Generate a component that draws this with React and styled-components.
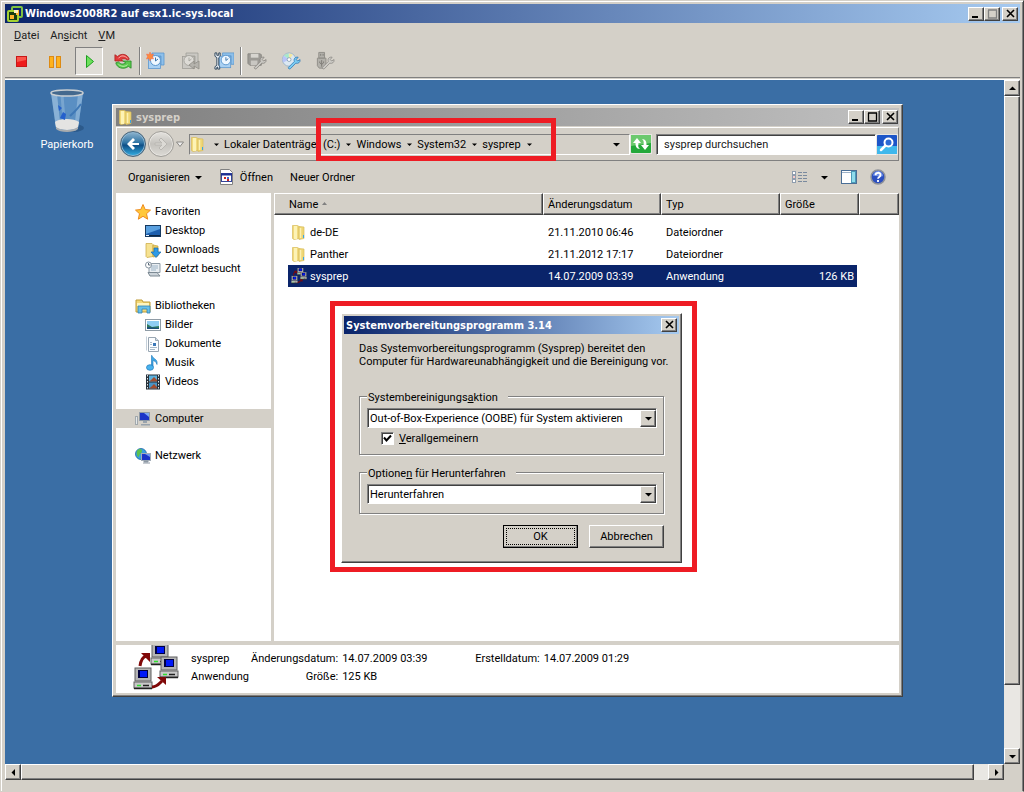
import { useState } from "react";
import styled, { createGlobalStyle, css } from "styled-components";

const files = [
  { name: "de-DE", date: "21.11.2010 06:46", type: "Dateiordner", size: "", icon: "folder" },
  { name: "Panther", date: "21.11.2012 17:17", type: "Dateiordner", size: "", icon: "folder" },
  { name: "sysprep", date: "14.07.2009 03:39", type: "Anwendung", size: "126 KB", icon: "sysprep" },
];

const navGroups = [
  {
    name: "Favoriten",
    icon: "star",
    items: [
      { name: "Desktop", icon: "desktop" },
      { name: "Downloads", icon: "downloads" },
      { name: "Zuletzt besucht", icon: "recent" },
    ],
  },
  {
    name: "Bibliotheken",
    icon: "library",
    items: [
      { name: "Bilder", icon: "pictures" },
      { name: "Dokumente", icon: "document" },
      { name: "Musik", icon: "music" },
      { name: "Videos", icon: "video" },
    ],
  },
  { name: "Computer", icon: "computer", active: true, items: [] },
  { name: "Netzwerk", icon: "network", items: [] },
];

const crumbs = ["Lokaler Datenträger (C:)", "Windows", "System32", "sysprep"];

const clockPart = (
  <>
    <path d="M6 2h12v12h-3V5H6z" fill="#8fc0ea" stroke="#5b97cf" strokeWidth="0.800" />
    <rect x="2.500" y="5.500" width="12" height="12" fill="#a9d0f2" stroke="#5b97cf" strokeWidth="0.800" />
    <circle cx="9.500" cy="9.500" r="5" fill="#eef7ff" stroke="#5b97cf" />
    <path d="M9.500 6.500v3.500l2.500-2" fill="none" stroke="#3b74ac" />
  </>
);

const wrench = (color, edge) => (
  <path
    d="M8 17L14 11C13 8 15 6 18 6.500L16 9L17.500 10.500L20 9C20.500 12 18 13.500 15.500 12.800L10 18.500C8.500 19.500 7 18 8 17Z"
    fill={color}
    stroke={edge}
    strokeWidth="0.800"
  />
);

const pc = (x, y) => (
  <g transform={`translate(${x} ${y})`}>
    <rect x="1" y="0" width="16" height="13" fill="#b4b4b4" stroke="#606060" />
    <rect x="4" y="2" width="10" height="8" fill="#000040" />
    <rect x="6" y="3" width="7" height="6" fill="#0018f8" />
    <rect x="0" y="14" width="18" height="6" fill="#c8c8c8" stroke="#606060" />
    <path d="M3 17.500h4" stroke="#30e030" strokeWidth="1.500" />
    <path d="M9 17.500h6M0 20.500h18" stroke="#202020" strokeWidth="1.500" />
  </g>
);

const icons = {
  vm: (
    <>
      <rect x="5" y="1" width="10" height="10" rx="1" fill="none" stroke="#7fc241" strokeWidth="2" />
      <rect x="1" y="5" width="10" height="10" rx="1" fill="#163d12" stroke="#a4d233" strokeWidth="2" />
      <path d="M3 9h4v4H3z" fill="#ffb52e" />
      <path d="M7 4h5v5H9V7H7z" fill="#ffb52e" />
      <rect x="7" y="4" width="4" height="3" fill="#fff3c0" />
    </>
  ),
  stop: (
    <>
      <rect x="5.500" y="5.500" width="10" height="10" fill="#ee1c1c" stroke="#c81818" />
      <path d="M6 6h9v3l-9 2z" fill="#ff6d60" opacity="0.700" />
    </>
  ),
  pause: (
    <g fill="#ffb21c" stroke="#dc8a14">
      <rect x="4.500" y="5.500" width="4" height="11" />
      <rect x="11.500" y="5.500" width="4" height="11" />
    </g>
  ),
  play: <path d="M7.500 4.500v12l7-6z" fill="#6ee05c" stroke="#1da020" strokeLinejoin="round" />,
  reset: (
    <>
      <path d="M1 10V3l3 2c4-4 11-3 13 3l-2 1c-3-2-5-2-7 0l2 1z" fill="#e03a3a" stroke="#a81c1c" strokeWidth="0.800" />
      <path d="M19 10v8l-3-2C11 20 3 18 2 12l3-1c3 3 5 3 8 1l-3-2z" fill="#5cc84e" stroke="#1c861f" strokeWidth="0.800" />
      <path d="M5 7c3-4 7-3 10 0" fill="none" stroke="#ffc0b8" />
      <path d="M15 14c-3 3-7 2-10 0" fill="none" stroke="#c0f4b0" />
    </>
  ),
  snapshot: (
    <>
      {clockPart}
      <path d="M4 1l1 2.500 2.500-0.500-1 2.500 1 2.500L5 7.500 4 10 3 7.500 0.500 8l1-2.500-1-2.500L3 3.500z" fill="#ff8a3c" stroke="#f06a50" strokeWidth="0.500" />
    </>
  ),
  revert: (
    <g fill="#cac8c3" stroke="#a09e98" strokeWidth="0.800">
      <path d="M6 2h12v12h-3V5H6z" />
      <rect x="2.500" y="5.500" width="12" height="12" />
      <circle cx="9" cy="9.500" r="5" fill="#dddbd6" />
      <path d="M9 6.500v3.500l2.500-2" fill="none" />
      <path d="M14 10l-5 4 5 4v-3l5 3v-8l-5 3z" fill="#b5b3ad" stroke="#8f8d87" />
    </g>
  ),
  manager: (
    <>
      <g transform="translate(3 0)">{clockPart}</g>
      <path d="M1 2v3.500l2 1.500v8l-2 1.500V19h2v-2h1v2h2v-2.500L5 15V7l1.500-1.500V2H5v2.500H3V2z" fill="#e8eef4" stroke="#1f3850" strokeWidth="0.900" />
    </>
  ),
  floppy: (
    <>
      <path d="M1 3h13l1 1v11H3l-2-2z" fill="#9c9a95" stroke="#8a8883" />
      <rect x="4" y="3" width="8" height="4" fill="#d7d5d0" />
      <rect x="4" y="10" width="7" height="5" fill="#c9c7c2" />
      {wrench("#c9c7c2", "#83817c")}
    </>
  ),
  cd: (
    <>
      <circle cx="8.500" cy="9" r="7" fill="#dce8f2" stroke="#9db4c6" />
      <path d="M8.500 9L3 5a7 7 0 0 1 5-2.500z" fill="#a8e8c8" />
      <path d="M8.500 9V2.500a7 7 0 0 1 4 1.500z" fill="#f4e8a0" />
      <path d="M8.500 9l-6 3A7 7 0 0 1 3 5z" fill="#b8c4f8" />
      <circle cx="8.500" cy="9" r="2" fill="#fff" stroke="#8fa5b8" />
      {wrench("#7cccf2", "#2a76b4")}
    </>
  ),
  usb: (
    <>
      <path d="M4 1.500h6v6H4zM2.500 7.500h9v8l-2 2.500h-5l-2-2.500z" fill="#b3b1ab" stroke="#908e88" />
      <path d="M6 3v2M8.500 3v2M7 9.500v7M5 11v1.500L7 14l2-1.500V11" fill="none" stroke="#7d7b76" />
      {wrench("#cdcbc6", "#8a8883")}
    </>
  ),
  folder: (
    <>
      <path d="M1.500 1.500h5l1.500 1v12l-5 1-1.500-1z" fill="#f2da7c" stroke="#d9bd5c" strokeWidth="0.700" />
      <path d="M3 2h3v13H3z" fill="#fdf3b5" />
      <path d="M8 2.500l5 0.500v11.500l-5 1z" fill="#efd675" stroke="#d9bd5c" strokeWidth="0.700" />
      <path d="M9.500 4v10" stroke="#fbf0b4" strokeWidth="1.500" />
      <path d="M12.500 11v3" stroke="#38a5e8" />
    </>
  ),
  star: (
    <path d="M8 0.500l2.200 5 5.300 0.600-4 3.600 1.200 5.500L8 12.300l-4.700 2.900 1.200-5.500-4-3.600 5.300-0.600z" fill="#ffc83a" stroke="#ee8a1d" strokeWidth="1" />
  ),
  desktop: (
    <>
      <rect x="0.500" y="2.500" width="15" height="11" fill="#1d5fae" stroke="#16395f" />
      <path d="M1 3h14v3L1 11z" fill="#5aa0df" />
      <path d="M1 12.500h14" stroke="#0d2746" />
      <path d="M1 12.500h3" stroke="#e8f3ff" />
    </>
  ),
  downloads: (
    <>
      <path d="M1 1.500h6l1 1v12l-6 1-1-1z" fill="#f6e292" stroke="#c9a63e" strokeWidth="0.700" />
      <path d="M8 3l5 1v10l-5 1z" fill="#eacb62" stroke="#c9a63e" strokeWidth="0.700" />
      <path d="M9 6h4v4h3l-5 5.500L6 10h3z" fill="#2d9ae6" stroke="#176bb0" strokeWidth="0.700" />
    </>
  ),
  recent: (
    <>
      <path d="M4 2.500h11v9H4z" fill="#e9eef2" stroke="#8d9aa5" />
      <path d="M6 5h7M6 7h7M6 9h5" stroke="#9cb3c6" />
      <path d="M3 11.500h9l3 3.500H5z" fill="#ccd4da" stroke="#7c8993" />
      <circle cx="3.500" cy="4" r="3" fill="#fff" stroke="#8794a0" />
      <path d="M3.500 2v2h2" fill="none" stroke="#5a6b7a" />
    </>
  ),
  library: (
    <>
      <path d="M1 2h6l1 2h7v10H1z" fill="#f3d877" stroke="#bf9b36" />
      <path d="M2 5h12v3H2z" fill="#fff5be" />
      <path d="M3 8h12v7h-3v-4H7v4H3z" fill="#67bfe8" stroke="#2f84b6" strokeWidth="0.800" />
    </>
  ),
  pictures: (
    <>
      <rect x="0.500" y="2.500" width="15" height="11" fill="#fff" stroke="#8f9ca6" />
      <rect x="2" y="4" width="12" height="8" fill="#8fcdf2" />
      <path d="M2 7l5 3 7-1v3H2z" fill="#2f7a5c" />
      <path d="M2 10l12 1v1H2z" fill="#1b4f7a" />
    </>
  ),
  document: (
    <>
      <path d="M3.500 1.500h7l3 3v11h-10z" fill="#fbfdff" stroke="#99a6b2" />
      <path d="M10.500 1.500v3h3" fill="#d3dde6" stroke="#99a6b2" />
      <rect x="8" y="7" width="3" height="3" fill="#3a78b8" />
      <path d="M5 6.500h2M5 8.500h2M5 11.500h7M5 13.500h5" stroke="#a8bac9" />
      <path d="M1.500 0.500v14" stroke="#c5d0da" />
    </>
  ),
  music: (
    <>
      <path d="M7 0.500c1 4 6 3 5 9-1-3-3-4-4-4v6.500H6.500V0.500z" fill="#3fa7e6" stroke="#1c77b8" strokeWidth="0.600" />
      <ellipse cx="5" cy="12.500" rx="3.500" ry="2.800" fill="#48b2ee" stroke="#1c77b8" strokeWidth="0.700" />
    </>
  ),
  video: (
    <>
      <rect x="1" y="0.500" width="14" height="15" fill="#27313a" />
      <path d="M2.500 1v14M13.500 1v14" stroke="#dfe6ea" strokeDasharray="1.500 1.500" />
      <rect x="4" y="1.500" width="8" height="6" fill="#5cb1dd" />
      <rect x="4" y="8.500" width="8" height="6" fill="#4a94c4" />
      <path d="M6 6l3-3 3 3v1.500H4zM6 13l3-3 3 3v1.500H4z" fill="#a24d2f" />
    </>
  ),
  computer: (
    <>
      <rect x="0.500" y="5.500" width="2" height="8" fill="#e4e8ea" stroke="#a2a9ad" />
      <path d="M4.500 1.500h10v8h-10z" fill="#1b34c8" stroke="#8d98a4" />
      <path d="M9 2h5v4z" fill="#7fa9f3" />
      <path d="M8 10h4v2H8zM6 13h9v1.500H6z" fill="#98a3ad" />
    </>
  ),
  network: (
    <>
      <circle cx="6" cy="6" r="5.500" fill="#3aa0e0" stroke="#1b67a4" strokeWidth="0.800" />
      <path d="M2 3c2-3 5-2 5 0S5 5 4 8 1 6 2 3zM8 5l3 0-1 4z" fill="#5cc24d" />
      <rect x="6.500" y="5.500" width="9" height="7" fill="#1b34c8" stroke="#a3adb8" />
      <path d="M10 6h5v3z" fill="#6f97ee" />
      <path d="M9 13h4v1H9zM8 15h7" fill="#8d98a4" stroke="#8d98a4" />
    </>
  ),
  open: (
    <>
      <path d="M1.500 0.500h9l3 3v12h-12z" fill="#fff" stroke="#808080" />
      <rect x="2.500" y="4.500" width="10" height="8" fill="#fff" stroke="#35449a" />
      <path d="M2 5.500h11" stroke="#1c2f92" strokeWidth="2" />
      <path d="M5 9h2M8 11h2" stroke="#c22" strokeWidth="2" />
      <path d="M8 9h2" stroke="#46c" strokeWidth="2" />
    </>
  ),
  view: (
    <>
      <g fill="#fff" stroke="#8f9dae">
        <rect x="0.500" y="2.500" width="3" height="3" />
        <rect x="0.500" y="6.500" width="3" height="3" />
        <rect x="0.500" y="10.500" width="3" height="3" />
      </g>
      <path d="M6 3.500h4M11 3.500h4M6 6.500h4M11 6.500h4M6 9.500h4M11 9.500h4M6 12.500h4M11 12.500h4" stroke="#7a8a9e" />
      <path d="M1.500 8h1" stroke="#d33" />
    </>
  ),
  pane: (
    <>
      <rect x="0.500" y="1.500" width="15" height="13" fill="#fff" stroke="#4a6e96" />
      <path d="M1 3.500h9" stroke="#9db2c8" />
      <rect x="10.500" y="2.500" width="4" height="11" fill="#8fdcec" stroke="#4a9ab8" />
    </>
  ),
  help: (
    <>
      <circle cx="8" cy="8" r="7" fill="#2b4fc0" stroke="#8f9299" strokeWidth="1.500" />
      <path d="M3 7a5 5 0 0 1 10 0c-3 2-6-1-10 0z" fill="#6f90e8" />
      <path d="M5.500 6.200c0-3.200 5-3.200 5-0.200C10.500 8 8 7.800 8 9.800M8 11v2" fill="none" stroke="#fff" strokeWidth="1.800" />
    </>
  ),
  refresh: (
    <>
      <rect x="0" y="0" width="20" height="18" rx="1" fill="#24a83a" />
      <path d="M0 0h20v8L0 11z" fill="#6cc96e" />
      <path d="M6 3L2 8h2.500c0 4 1 5.500 4.500 6-2-2-2-3-1.500-6H10zM14 15l4-5h-2.500c0-4-1-5.500-4.500-6 2 2 2 3 1.500 6H10z" fill="#fff" />
    </>
  ),
  search: (
    <>
      <rect x="0" y="0" width="20" height="19" rx="1" fill="#1c55c8" />
      <path d="M0 11h20v8H0z" fill="#3fb8ec" />
      <path d="M8.500 10.500L4 15" stroke="#fff" strokeWidth="2.500" strokeLinecap="round" />
      <circle cx="11.500" cy="7.500" r="4" fill="#2c6ad4" stroke="#fff" strokeWidth="2" />
    </>
  ),
};

function Icon({ name, size = 16, box = 16 }) {
  return (
    <svg width={size} height={size} viewBox={`0 0 ${box} ${box}`} aria-hidden="true">
      {icons[name]}
    </svg>
  );
}

function SysprepIcon({ size }) {
  return (
    <svg width={size} height={size} viewBox="0 0 46 46" aria-hidden="true">
      {pc(18, -1)}
      {pc(27, 12)}
      {pc(1, 23)}
      <path d="M7 21C8 14 10 12 13 11M19 42c5 0 7-3 10-6" fill="none" stroke="#800808" strokeWidth="3" />
      <path d="M8 8h9v9zM24 32h9v8z" fill="#800808" />
    </svg>
  );
}

function FileIcon({ name }) {
  return name === "sysprep" ? <SysprepIcon size={16} /> : <Icon name={name} />;
}

function Arrow({ dir = "down", size = 7 }) {
  const turn = { down: 0, up: 180, left: 90, right: 270 }[dir];
  return (
    <svg width={size} height={size} viewBox="0 0 7 7" aria-hidden="true">
      <path d="M0 2h7L3.500 5.500z" fill="#000" transform={`rotate(${turn} 3.500 3.500)`} />
    </svg>
  );
}

function Glyph({ type, dim }) {
  const color = dim ? "#808080" : "#000";
  return (
    <svg width="11" height="10" viewBox="0 0 11 10" aria-hidden="true">
      {type === "min" && <path d="M1 8h6" stroke={color} strokeWidth="2" />}
      {type === "max" && <path d="M1.500 1v8h8V1M1 1h9" fill="none" stroke={color} strokeWidth="1.300" />}
      {type === "close" && <path d="M2 1l7 7M9 1L2 8" stroke={color} strokeWidth="1.600" />}
    </svg>
  );
}

function RecycleBin() {
  return (
    <svg width="40" height="46" viewBox="0 0 40 46" aria-hidden="true">
      <ellipse cx="26" cy="40" rx="11" ry="4" fill="#1e4672" opacity="0.500" />
      <path d="M4 5l5 35c3 4 18 4 22 0l5-35z" fill="#5a8fc3" />
      <path d="M4 5l5 35c2 2 3 2 5 3L10 6z" fill="#a9c8e2" opacity="0.600" />
      <path d="M31 6l-4 37c2 0 3-1 4-3l5-35z" fill="#9fc2e0" opacity="0.600" />
      <path d="M15 7l2 25" stroke="#8db4d8" strokeWidth="3" opacity="0.600" />
      <path d="M8 34c4-4 19-4 24 0l-1 5c-4 4-18 4-22 0z" fill="#e4e4e2" />
      <path d="M9 39c4 4 18 4 22 0v2c-4 4-18 4-22 0z" fill="#a9acae" />
      <path d="M11 17l4 3-3 3zM16 24l3 2-1 6-5-2z" fill="#2460cc" />
      <path d="M34 16c-5 7-6 7-11 12" fill="none" stroke="#3f78b6" strokeWidth="2" />
      <ellipse cx="20" cy="5" rx="16" ry="3" fill="#44698e" stroke="#c9ced2" strokeWidth="1.500" />
    </svg>
  );
}

function TitleButtons({ dimMax }) {
  return (
    <WindowButtons>
      <TitleButton aria-label="Minimieren"><Glyph type="min" /></TitleButton>
      <TitleButton aria-label="Maximieren"><Glyph type="max" dim={dimMax} /></TitleButton>
      <TitleButton $spaced aria-label="Schließen"><Glyph type="close" /></TitleButton>
    </WindowButtons>
  );
}

function Console({ children }) {
  return (
    <ConsoleWindow>
      <TitleBar>
        <Icon name="vm" />
        <TitleText>Windows2008R2 auf esx1.ic-sys.local</TitleText>
        <TitleButtons dimMax />
      </TitleBar>
      <MenuBar>
        <MenuItem><u>D</u>atei</MenuItem>
        <MenuItem>An<u>s</u>icht</MenuItem>
        <MenuItem><u>V</u>M</MenuItem>
      </MenuBar>
      <ToolBar>
        <ToolGroup>
          <ToolButton aria-label="Ausschalten"><Icon name="stop" size={20} box={20} /></ToolButton>
          <ToolButton aria-label="Anhalten"><Icon name="pause" size={20} box={20} /></ToolButton>
          <ToolButton $pressed aria-label="Einschalten"><Icon name="play" size={20} box={20} /></ToolButton>
          <ToolButton aria-label="Zurücksetzen"><Icon name="reset" size={18} box={20} /></ToolButton>
        </ToolGroup>
        <ToolGroup>
          <ToolButton aria-label="Snapshot erstellen"><Icon name="snapshot" size={20} box={20} /></ToolButton>
          <ToolButton aria-label="Snapshot wiederherstellen"><Icon name="revert" size={20} box={20} /></ToolButton>
          <ToolButton aria-label="Snapshots verwalten"><Icon name="manager" size={20} box={21} /></ToolButton>
        </ToolGroup>
        <ToolGroup>
          <ToolButton aria-label="Diskette"><Icon name="floppy" size={20} box={21} /></ToolButton>
          <ToolButton aria-label="CD/DVD"><Icon name="cd" size={20} box={21} /></ToolButton>
          <ToolButton aria-label="USB"><Icon name="usb" size={20} box={21} /></ToolButton>
        </ToolGroup>
      </ToolBar>
      <Screen>
        <Desktop>{children}</Desktop>
        <ScrollTrack $vertical>
          <ScrollButton aria-label="Nach oben"><Arrow dir="up" /></ScrollButton>
          <ScrollThumb $share={592} />
          <ScrollRest $share={63} />
          <ScrollButton aria-label="Nach unten"><Arrow /></ScrollButton>
        </ScrollTrack>
        <ScrollTrack>
          <ScrollButton aria-label="Nach links"><Arrow dir="left" /></ScrollButton>
          <ScrollThumb $share={953} />
          <ScrollRest $share={14} />
          <ScrollButton aria-label="Nach rechts"><Arrow dir="right" /></ScrollButton>
        </ScrollTrack>
      </Screen>
    </ConsoleWindow>
  );
}

function AddressBar() {
  return (
    <AddressRow>
      <RoundButton $active aria-label="Zurück">
        <svg width="16" height="14" viewBox="0 0 16 14"><path d="M8 1L2 7l6 6 2-2-3-3h7V6H7l3-3z" fill="#fff" /></svg>
      </RoundButton>
      <RoundButton aria-label="Vorwärts">
        <svg width="16" height="14" viewBox="0 0 16 14"><path d="M8 1l6 6-6 6-2-2 3-3H2V6h7L6 3z" fill="#dcdad5" stroke="#b9b7b2" /></svg>
      </RoundButton>
      <HistoryButton aria-label="Verlauf">
        <svg width="8" height="7" viewBox="0 0 8 7"><path d="M0.500 1h7L4 5.500z" fill="#eee" stroke="#8a8884" /></svg>
      </HistoryButton>
      <Crumbs>
        <Icon name="folder" />
        <CrumbSpacer />
        <Arrow size={5} />
        {crumbs.map((crumb) => (
          <Crumb key={crumb}>
            {crumb}
            <Arrow size={5} />
          </Crumb>
        ))}
        <CrumbMore aria-label="Vorherige Orte"><Arrow /></CrumbMore>
      </Crumbs>
      <SquareButton aria-label="Aktualisieren">
        <svg width="20" height="18" viewBox="0 0 20 18">{icons.refresh}</svg>
      </SquareButton>
      <SearchInput aria-label="Suchen" placeholder="sysprep durchsuchen" />
      <SquareButton aria-label="Suche starten">
        <svg width="20" height="19" viewBox="0 0 20 19">{icons.search}</svg>
      </SquareButton>
    </AddressRow>
  );
}

function Explorer() {
  const [selected, setSelected] = useState("sysprep");

  return (
    <ExplorerWindow>
      <TitleBar $inactive>
        <Icon name="folder" />
        <TitleText>sysprep</TitleText>
        <TitleButtons />
      </TitleBar>
      <AddressBar />
      <CommandBar>
        <Command>Organisieren <Arrow /></Command>
        <Command><Icon name="open" />Öffnen</Command>
        <Command>Neuer Ordner</Command>
        <CommandRight>
          <Command aria-label="Ansicht"><Icon name="view" /></Command>
          <Command aria-label="Weitere Optionen"><Arrow /></Command>
          <Command aria-label="Vorschaufenster"><Icon name="pane" /></Command>
          <Command aria-label="Hilfe"><Icon name="help" /></Command>
        </CommandRight>
      </CommandBar>
      <ExplorerBody>
        <SideNav>
          {navGroups.map((group) => (
            <NavGroup key={group.name}>
              <NavLink href="#" $active={group.active}>
                <Icon name={group.icon} />
                {group.name}
              </NavLink>
              {group.items.map((item) => (
                <NavLink href="#" $child key={item.name}>
                  <Icon name={item.icon} />
                  {item.name}
                </NavLink>
              ))}
            </NavGroup>
          ))}
        </SideNav>
        <FileArea>
          <FileTable>
            <colgroup>
              <col />
              <Col $width={118} />
              <Col $width={119} />
              <Col $width={79} />
              <Col $width={40} />
            </colgroup>
            <thead>
              <tr>
                <HeadCell $first>
                  Name{" "}
                  <svg width="7" height="7" viewBox="0 0 7 7"><path d="M1 4l2.500-3L6 4z" fill="#808080" /></svg>
                </HeadCell>
                <HeadCell>Änderungsdatum</HeadCell>
                <HeadCell>Typ</HeadCell>
                <HeadCell>Größe</HeadCell>
                <HeadCell as="td" />
              </tr>
            </thead>
            <FileRows>
              {files.map((file) => (
                <FileRow
                  key={file.name}
                  $selected={file.name === selected}
                  onClick={() => setSelected(file.name)}
                >
                  <FileCell $first>
                    <FileName>
                      <FileIcon name={file.icon} />
                      {file.name}
                    </FileName>
                  </FileCell>
                  <FileCell>{file.date}</FileCell>
                  <FileCell>{file.type}</FileCell>
                  <FileCell $last>{file.size}</FileCell>
                </FileRow>
              ))}
            </FileRows>
          </FileTable>
        </FileArea>
      </ExplorerBody>
      <Details>
        <SysprepIcon size={46} />
        <DetailGrid>
          <span>sysprep</span>
          <DetailLabel>Änderungsdatum:</DetailLabel>
          <span>14.07.2009 03:39</span>
          <DetailLabel>Erstelldatum:</DetailLabel>
          <span>14.07.2009 01:29</span>
          <span>Anwendung</span>
          <DetailLabel>Größe:</DetailLabel>
          <span>125 KB</span>
        </DetailGrid>
      </Details>
    </ExplorerWindow>
  );
}

function SysprepDialog() {
  const [generalize, setGeneralize] = useState(true);

  return (
    <DialogWindow role="dialog" aria-labelledby="dialog-title">
      <TitleBar $dialog>
        <TitleText id="dialog-title">Systemvorbereitungsprogramm 3.14</TitleText>
        <WindowButtons>
          <TitleButton aria-label="Schließen"><Glyph type="close" /></TitleButton>
        </WindowButtons>
      </TitleBar>
      <DialogBody>
        <Intro>
          Das Systemvorbereitungsprogramm (Sysprep) bereitet den
          <br />
          Computer für Hardwareunabhängigkeit und die Bereinigung vor.
        </Intro>
        <GroupBox>
          <Legend htmlFor="action">Systembereinigungs<u>a</u>ktion</Legend>
          <SelectBox>
            <Select id="action">
              <option>Out-of-Box-Experience (OOBE) für System aktivieren</option>
              <option>Systemüberwachungsmodus aktivieren</option>
            </Select>
            <SelectArrow><Arrow /></SelectArrow>
          </SelectBox>
          <CheckLabel>
            <CheckWrap>
              <CheckBox
                type="checkbox"
                checked={generalize}
                onChange={(e) => setGeneralize(e.target.checked)}
              />
              {generalize && (
                <CheckMark width="13" height="13" viewBox="0 0 13 13">
                  <path d="M3 5.500l2.500 3L10 3.500" fill="none" stroke="#000" strokeWidth="2" />
                </CheckMark>
              )}
            </CheckWrap>
            <span><u>V</u>erallgemeinern</span>
          </CheckLabel>
        </GroupBox>
        <GroupBox>
          <Legend htmlFor="shutdown">Optione<u>n</u> für Herunterfahren</Legend>
          <SelectBox>
            <Select id="shutdown">
              <option>Herunterfahren</option>
              <option>Neu starten</option>
              <option>Beenden</option>
            </Select>
            <SelectArrow><Arrow /></SelectArrow>
          </SelectBox>
        </GroupBox>
        <ButtonRow>
          <PushButton $default><span>OK</span></PushButton>
          <PushButton><span>Abbrechen</span></PushButton>
        </ButtonRow>
      </DialogBody>
    </DialogWindow>
  );
}

function App() {
  return (
    <>
      <GlobalStyle />
      <Console>
        <DesktopIcon href="#">
          <RecycleBin />
          Papierkorb
        </DesktopIcon>
        <Explorer />
        <PathMark />
        <DialogMark>
          <SysprepDialog />
        </DialogMark>
      </Console>
    </>
  );
}

export default App;

const face = "#d4d0c8";

const raised = css`
  border: 1px solid;
  border-color: #ffffff #404040 #404040 #ffffff;
  box-shadow: inset -1px -1px 0 #808080;
`;
const sunken = css`
  border: 1px solid;
  border-color: #808080 #ffffff #ffffff #808080;
  box-shadow: inset 1px 1px 0 #404040;
`;

const GlobalStyle = createGlobalStyle`
  * {
    box-sizing: border-box;
  }
  body {
    margin: 0;
    background: ${face};
  }
  body, button, input, select, table {
    font-family: Roboto, "Open Sans", sans-serif;
    font-size: 11px;
    line-height: 13px;
    color: #000000;
  }
  button {
    padding: 0;
    border: none;
    background: none;
  }
  a {
    color: inherit;
    text-decoration: none;
  }
  svg {
    flex: none;
  }
`;
const ConsoleWindow = styled.div`
  display: flex;
  flex-direction: column;
  min-height: 100vh;
  padding: 3px 3px 11px 4px;
  background: ${face};
  border: 1px solid;
  border-color: ${face} #404040 ${face} ${face};
  box-shadow: inset 1px 1px 0 #ffffff, inset -1px 0 0 #808080;
`;
const TitleBar = styled.div`
  display: flex;
  align-items: center;
  gap: 2px;
  height: ${(props) => (props.$dialog || props.$inactive ? 18 : 19)}px;
  padding: 0 ${(props) => (props.$inactive ? 1 : 2)}px 0 2px;
  color: ${(props) => (props.$inactive ? face : "#ffffff")};
  background: ${(props) =>
    props.$inactive
      ? "linear-gradient(90deg, #808080, #c0c0c0)"
      : "linear-gradient(90deg, #0a246a, #a6caf0)"};
`;
const TitleText = styled.div`
  font-family: "DejaVu Sans Condensed", "Open Sans", sans-serif;
  font-weight: bold;
  white-space: nowrap;
`;
const WindowButtons = styled.div`
  display: flex;
  margin-left: auto;
`;
const TitleButton = styled.button`
  display: flex;
  align-items: center;
  justify-content: center;
  width: 16px;
  height: 14px;
  margin-left: ${(props) => (props.$spaced ? 2 : 0)}px;
  background: ${face};
  ${raised}
`;
const MenuBar = styled.div`
  display: flex;
  align-items: center;
  gap: 11px;
  height: 24px;
  padding: 0 9px;
`;
const MenuItem = styled.button`
  color: #202020;
`;
const ToolBar = styled.div`
  display: flex;
  height: 31px;
  padding: 0 2px 2px;
  border-bottom: 1px solid #808080;
`;
const ToolGroup = styled.div`
  display: flex;
  gap: 6px;

  & + & {
    margin-left: 2px;
    padding-left: 2px;
    border-left: 1px solid #808080;
    box-shadow: inset 1px 0 0 #ffffff;
  }
`;
const ToolButton = styled.button`
  display: flex;
  align-items: center;
  justify-content: center;
  width: 28px;
  height: 28px;
  ${(props) =>
    props.$pressed &&
    css`
      background: #e0ddd7;
      border: 1px solid;
      border-color: #808080 #ffffff #ffffff #808080;
    `}
`;
const Screen = styled.div`
  display: grid;
  grid-template-columns: 1fr 16px;
  grid-template-rows: 1fr 16px;
  flex: 1;
  margin-top: 1px;
  border-top: 1px solid #ffffff;
`;
const Desktop = styled.main`
  position: relative;
  overflow: hidden;
  background: #3a6ea5;
`;
const ScrollTrack = styled.div`
  display: flex;
  flex-direction: ${(props) => (props.$vertical ? "column" : "row")};
`;
const ScrollButton = styled.button`
  display: flex;
  align-items: center;
  justify-content: center;
  width: 16px;
  height: 16px;
  background: ${face};
  ${raised}
`;
const ScrollThumb = styled.div`
  flex: ${(props) => props.$share} 0 0;
  ${raised}
`;
const ScrollRest = styled.div`
  flex: ${(props) => props.$share} 0 0;
  background: #e9e7e3;
`;
const DesktopIcon = styled.a`
  position: absolute;
  left: 32px;
  top: 8px;
  display: flex;
  flex-direction: column;
  align-items: center;
  gap: 4px;
  width: 60px;
  color: #ffffff;
`;
const ExplorerWindow = styled.section`
  position: absolute;
  left: 107px;
  top: 24px;
  display: flex;
  flex-direction: column;
  width: 791px;
  height: 593px;
  padding: 3px;
  background: ${face};
  ${raised}
`;
const AddressRow = styled.div`
  display: flex;
  align-items: center;
  height: 34px;
  margin-top: 1px;
  padding: 0 0 0 3px;
  border: 1px solid;
  border-color: #ffffff #808080 #808080 #ffffff;
`;
const RoundButton = styled.button`
  display: flex;
  align-items: center;
  justify-content: center;
  width: 26px;
  height: 26px;
  margin-right: 2px;
  border: 1px solid ${(props) => (props.$active ? "#4a6478" : "#a09e99")};
  border-radius: 50%;
  box-shadow: inset 0 0 0 1px ${(props) => (props.$active ? "#8fb8d4" : "#e8e6e2")};
  background: ${(props) =>
    props.$active
      ? "linear-gradient(#8fb4ce, #2f74a4 45%, #0f4f86 55%, #35b0e4)"
      : "linear-gradient(#e4e2de, #c4c2bd 50%, #dcdad5)"};
`;
const HistoryButton = styled.button`
  display: flex;
  width: 13px;
`;
const Crumbs = styled.nav`
  display: flex;
  align-items: center;
  flex: 1;
  height: 21px;
  white-space: nowrap;
  border: 1px solid;
  border-color: #808080 #ffffff #ffffff #808080;
`;
const CrumbSpacer = styled.span`
  width: 8px;
`;
const Crumb = styled.button`
  display: flex;
  align-items: center;
  gap: 6px;
  margin-left: 5px;
`;
const CrumbMore = styled.button`
  display: flex;
  margin-left: auto;
  padding: 0 9px;
`;
const SquareButton = styled.button`
  display: flex;
  border: 1px solid #e8e6e2;
`;
const SearchInput = styled.input`
  width: 220px;
  height: 21px;
  margin-left: 4px;
  padding: 0 7px;
  background: #ffffff;
  ${sunken}

  &::placeholder {
    color: #202020;
    opacity: 1;
  }
`;
const CommandBar = styled.div`
  display: flex;
  align-items: center;
  gap: 17px;
  height: 32px;
  padding: 0 13px 0 12px;
`;
const Command = styled.button`
  display: flex;
  align-items: center;
  gap: 5px;
`;
const CommandRight = styled.div`
  display: flex;
  align-items: center;
  gap: 13px;
  margin-left: auto;
`;
const ExplorerBody = styled.div`
  display: flex;
  flex: 1;
  border-bottom: 4px solid ${face};
`;
const SideNav = styled.nav`
  display: flex;
  flex-direction: column;
  gap: 18px;
  flex: none;
  width: 155px;
  padding-top: 9px;
  background: #ffffff;
`;
const NavGroup = styled.div`
  display: flex;
  flex-direction: column;
`;
const NavLink = styled.a`
  display: flex;
  align-items: center;
  gap: 4px;
  height: 19px;
  padding-left: ${(props) => (props.$child ? 29 : 19)}px;
  background: ${(props) => (props.$active ? face : "transparent")};
`;
const FileArea = styled.div`
  flex: 1;
  background: #ffffff;
  border-left: 3px solid ${face};
`;
const FileTable = styled.table`
  width: 100%;
  table-layout: fixed;
  border-collapse: separate;
  border-spacing: 0;
`;
const Col = styled.col`
  width: ${(props) => props.$width}px;
`;
const HeadCell = styled.th`
  height: 22px;
  padding: 1px 4px 0 ${(props) => (props.$first ? 14 : 4)}px;
  font-weight: normal;
  text-align: left;
  background: ${face};
  ${raised}
`;
const FileRows = styled.tbody`
  &::before {
    content: "";
    display: block;
    height: 6px;
  }
`;
const FileRow = styled.tr`
  ${(props) =>
    props.$selected &&
    css`
      color: #ffffff;

      td {
        background-color: #0a246a;
      }
    `}
`;
const FileCell = styled.td`
  height: 22px;
  padding: 0 3px 0 5px;
  background-clip: padding-box;
  ${(props) =>
    props.$first &&
    css`
      padding-left: 3px;
      border-left: 14px solid #ffffff;
    `}
  ${(props) =>
    props.$last &&
    css`
      text-align: right;
      border-right: 2px solid #ffffff;
    `}
`;
const FileName = styled.div`
  display: flex;
  align-items: center;
  gap: 3px;
`;
const Details = styled.footer`
  display: flex;
  align-items: flex-start;
  gap: 12px;
  height: 48px;
  padding-left: 17px;
  background: #ffffff;
`;
const DetailGrid = styled.div`
  display: grid;
  grid-template-columns: 56px auto 129px auto auto;
  column-gap: 4px;
  row-gap: 5px;
  padding-top: 7px;
  white-space: nowrap;
`;
const DetailLabel = styled.span`
  text-align: right;
`;
const Mark = styled.div`
  position: absolute;
  border: 5px solid #ee1c24;
`;
const PathMark = styled(Mark)`
  left: 311px;
  top: 38px;
  width: 240px;
  height: 43px;
`;
const DialogMark = styled(Mark)`
  left: 325px;
  top: 221px;
  padding: 7px 10px 4px 6px;
  background: #ffffff;
`;
const DialogWindow = styled.section`
  width: 341px;
  padding: 2px;
  background: ${face};
  ${raised}
`;
const DialogBody = styled.div`
  padding: 8px 15px 12px;
`;
const Intro = styled.p`
  margin: 0 0 28px;
  white-space: nowrap;
`;
const GroupBox = styled.div`
  padding: 0 6px 9px 7px;
  border: 1px solid #808080;
  box-shadow: 1px 1px 0 #ffffff, inset 1px 1px 0 #ffffff;

  & + & {
    margin-top: 17px;
  }
`;
const Legend = styled.label`
  display: table;
  margin: -6px 0 4px;
  padding: 0 10px 0 1px;
  background: ${face};
`;
const SelectBox = styled.div`
  position: relative;
`;
const Select = styled.select`
  display: block;
  width: 100%;
  height: 20px;
  padding: 0 20px 0 2px;
  appearance: none;
  border-radius: 0;
  background: #ffffff;
  ${sunken}
`;
const SelectArrow = styled.span`
  position: absolute;
  top: 2px;
  right: 1px;
  display: flex;
  align-items: center;
  justify-content: center;
  width: 16px;
  height: 17px;
  background: ${face};
  pointer-events: none;
  ${raised}
`;
const CheckLabel = styled.label`
  display: flex;
  align-items: center;
  gap: 5px;
  margin: 4px 0 0 14px;
`;
const CheckWrap = styled.span`
  position: relative;
  display: flex;
`;
const CheckBox = styled.input`
  width: 13px;
  height: 13px;
  margin: 0;
  appearance: none;
  background: #ffffff;
  ${sunken}
`;
const CheckMark = styled.svg`
  position: absolute;
  left: 0;
  top: 0;
  pointer-events: none;
`;
const ButtonRow = styled.div`
  display: flex;
  justify-content: flex-end;
  gap: 11px;
  margin-top: 11px;
`;
const PushButton = styled.button`
  width: 75px;
  height: 23px;
  padding: 2px;
  background: ${face};
  ${raised}
  ${(props) =>
    props.$default &&
    css`
      outline: 1px solid #000000;
      outline-offset: -1px;
    `}

  span {
    display: block;
    line-height: 15px;
    border: 1px dotted ${(props) => (props.$default ? "#000000" : "transparent")};
  }
`;
